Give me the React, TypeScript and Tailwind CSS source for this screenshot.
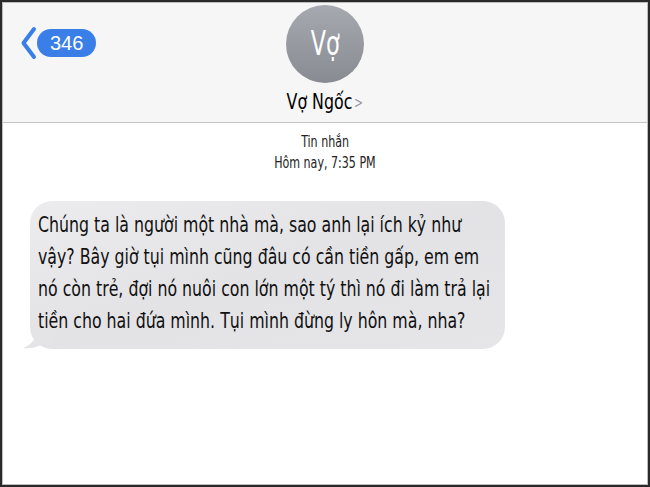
import React from 'react';

const narrow = { fontFamily: '"DejaVu Sans Condensed", "DejaVu Sans", sans-serif' };

const lines = [
    'Chúng ta là người một nhà mà, sao anh lại ích kỷ như',
    'vậy? Bây giờ tụi mình cũng đâu có cần tiền gấp, em em',
    'nó còn trẻ, đợi nó nuôi con lớn một tý thì nó đi làm trả lại',
    'tiền cho hai đứa mình. Tụi mình đừng ly hôn mà, nha?',
];

export default function App() {
    return (
        <div className="w-[650px] h-[487px] bg-[#2a2a2a] p-[2px]">
            <div className="w-full h-full bg-white border border-[#bdbdbd] flex flex-col overflow-hidden">
                {/* Header */}
                <div className="relative h-[120px] bg-[#f6f6f7] border-b border-[#c4c4c8] flex flex-col items-center shrink-0">
                    <div className="absolute left-[17px] top-[23px] flex items-center">
                        <svg width="17" height="34" viewBox="0 0 17 34" fill="none">
                            <path d="M14 3 L3.5 17 L14 31" stroke="#3a7fe8" strokeWidth="4" strokeLinecap="round" strokeLinejoin="round" />
                        </svg>
                        <div
                            className="h-[28px] px-[13px] rounded-full bg-[#3a7fe8] text-white text-[20px] leading-[28px]"
                            style={{ fontFamily: '"Liberation Sans", Arial, sans-serif' }}
                        >
                            346
                        </div>
                    </div>
                    <div className="mt-[2px] w-[78px] h-[78px] rounded-full bg-gradient-to-b from-[#a6a9b0] to-[#898b92] flex items-center justify-center">
                        <span className="inline-block text-white text-[33px] leading-none scale-x-[0.75] -mt-[2px]" style={narrow}>Vợ</span>
                    </div>
                    <div className="mt-[6px] flex items-center gap-[2px] scale-x-[0.8]" style={narrow}>
                        <span className="text-[22px] leading-[26px] text-black">Vợ Ngốc</span>
                        <span className="text-[15px] text-[#9a9a9f] leading-none mt-[3px]">&gt;</span>
                    </div>
                </div>

                {/* Timestamp */}
                <div className="flex flex-col items-center mt-[8px] text-[#222] text-[16px] leading-[21px]" style={narrow}>
                    <span className="inline-block scale-x-[0.77]">Tin nhắn</span>
                    <span className="inline-block scale-x-[0.77]">Hôm nay, 7:35 PM</span>
                </div>

                {/* Message bubble */}
                <div className="relative ml-[27px] mt-[28px] w-[475px] rounded-[22px] bg-gradient-to-br from-[#ececee] via-[#e3e3e6] to-[#e6e6e9] pl-[8px] pt-[8px] pb-[12px]">
                    <svg className="absolute left-[-7px] bottom-0" width="30" height="28" viewBox="0 0 30 28">
                        <path d="M12 0 L12 14 C12 20 6 25 0 27 C8 28 16 26 22 22 L30 28 L30 0 Z" fill="#e4e4e7" />
                    </svg>
                    <div className="relative text-[21px] leading-[32px] text-[#111] whitespace-nowrap origin-left scale-x-[0.835]" style={narrow}>
                        {lines.map((l, i) => (
                            <div key={i}>{l}</div>
                        ))}
                    </div>
                </div>
            </div>
        </div>
    );
}
